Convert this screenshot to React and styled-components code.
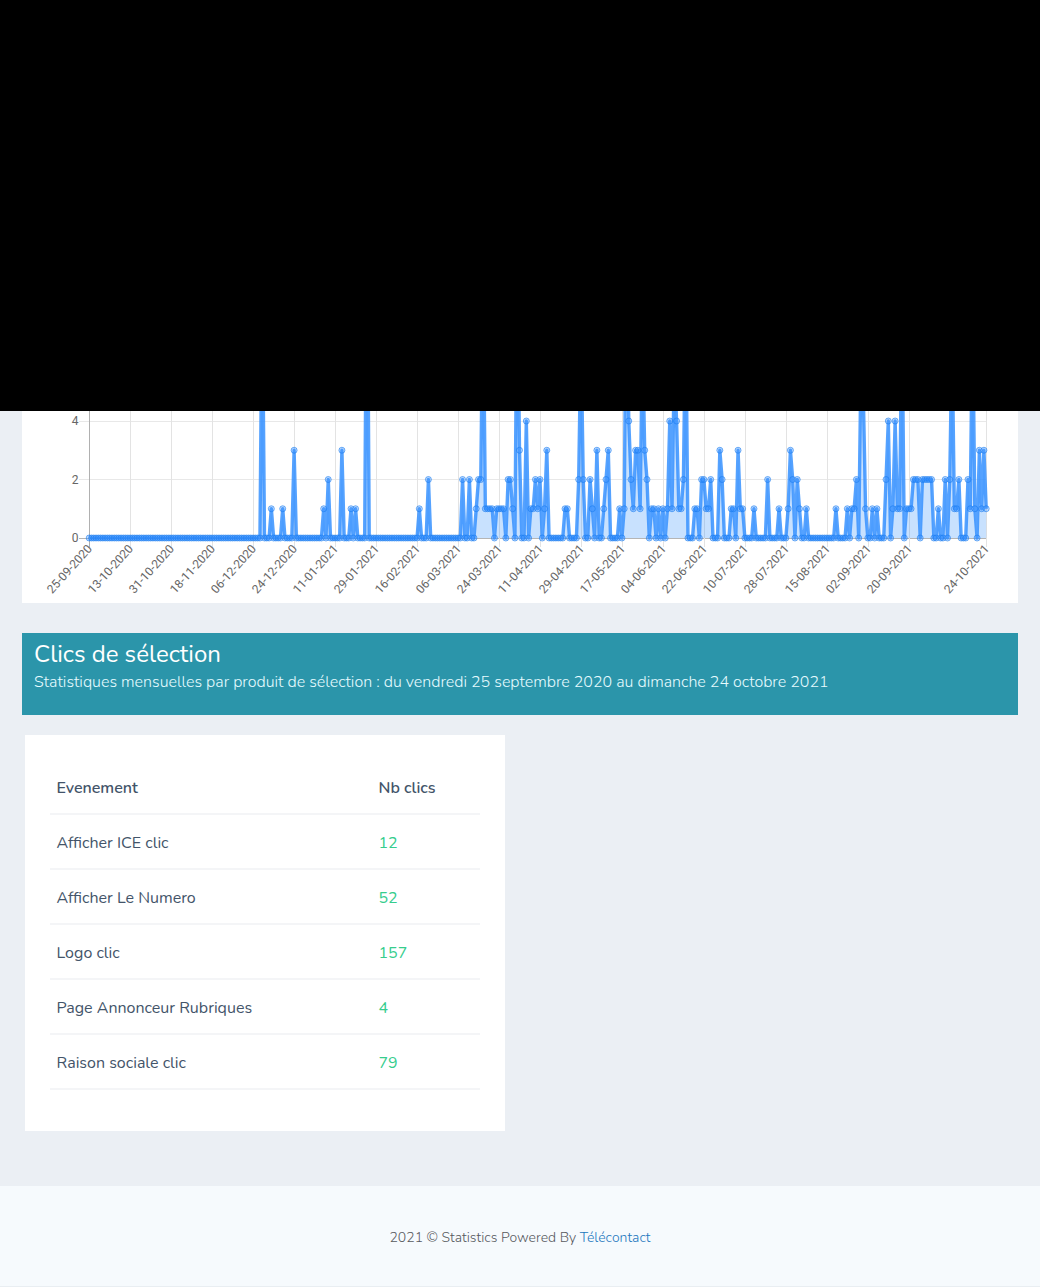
import React from "react";
import styled, { createGlobalStyle } from "styled-components";

const GlobalStyle = createGlobalStyle`
  * { box-sizing: border-box; }
  body {
    margin: 0;
    background: #ebeff4;
    font-family: "Nunito", "Open Sans", "Noto Sans", sans-serif;
    color: #435469;
  }
`;

const Page = styled.div`
  display: flex;
  flex-direction: column;
  min-height: 1287px;
`;
const Cover = styled.div`
  height: 411px;
  background: #000;
`;
const Content = styled.main`
  display: flex;
  flex-direction: column;
  align-items: flex-start;
  padding: 0 22px;
  height: 775px;
`;
const ChartCard = styled.section`
  width: 100%;
  height: 192px;
  background: #fff;
`;
const ChartSvg = styled.svg`
  display: block;
  font-family: Roboto, "Liberation Sans", sans-serif;
  font-size: 12px;
  fill: #666;
`;
const Banner = styled.header`
  width: 100%;
  height: 82px;
  margin-top: 30px;
  padding: 5px 12px 0;
  background: #2b95aa;
  color: #fff;
`;
const Title = styled.h2`
  margin: 0;
  font-size: 24px;
  line-height: 32px;
  font-weight: 400;
`;
const Subtitle = styled.p`
  margin: 0;
  font-size: 16px;
  font-weight: 300;
  line-height: 24px;
  color: #e6fbff;
  white-space: nowrap;
`;
const TableCard = styled.section`
  width: 480px;
  height: 396px;
  margin: 20px 0 0 3px;
  padding: 25px 25px 0;
  background: #fff;
`;
const Table = styled.table`
  width: 100%;
  table-layout: fixed;
  border-collapse: collapse;
  font-size: 16px;
  line-height: 24px;
`;
const cell = `
  padding: 2px 6px 0 6.5px;
  text-align: left;
  border-bottom: 2px solid #f4f5f7;
`;
const Th = styled.th`
  ${cell}
  height: 54px;
  padding-top: 3px;
  width: ${(p) => p.$w}px;
  font-weight: 600;
`;
const Td = styled.td`
  ${cell}
  height: 55px;
  color: ${(p) => (p.$count ? "#36cd8d" : "#435469")};
`;
const Footer = styled.footer`
  display: flex;
  align-items: center;
  justify-content: center;
  height: 101px;
  padding-top: 3px;
  background: #f6fafd;
  border-bottom: 1px solid #e9eef2;
  font-size: 14px;
  font-weight: 300;
  color: #56595d;
`;
const Credit = styled.span`
  white-space: nowrap;
`;
const Link = styled.a`
  color: #2277bd;
  text-decoration: none;
`;

const DAYS = 395;
const LEFT = 67.2;
const STEP = 897 / 394;
const ZERO = 127;
const UNIT = 29.25;

const peaks = {
  76: 9, 80: 1, 85: 1, 90: 3, 103: 1, 105: 2, 111: 3, 115: 1, 117: 1, 122: 12, 145: 1, 149: 2,
};
const runs = [
  [164, [2, 0, 0, 2, 0, 0, 1, 2, 2, 9, 1, 1, 1, 1, 0, 1, 1, 1, 1, 0, 2, 2, 1, 0, 10, 3, 0, 0, 4, 0, 1, 1, 2, 1, 2, 0, 1, 3]],
  [209, [1, 1, 0, 0, 0, 0, 2, 7, 2, 0, 0, 2, 1, 0, 3, 0, 0, 1, 2, 3, 0, 0, 0, 0, 1, 0, 1, 10, 4, 2, 1, 3, 3, 1, 7, 3, 2, 0, 1, 1, 0, 1, 0, 1, 0, 1, 4, 1, 6, 4, 1, 1, 2, 8, 0, 0, 0, 1, 1, 0, 2, 2, 1, 1, 2, 0, 0, 0, 3, 2, 0, 0, 0, 1, 1, 0, 3, 1, 1]],
  [292, [1]], [298, [2]], [303, [1]],
  [307, [1, 3, 2, 0, 2, 1, 0, 0, 1]],
  [328, [1]],
  [333, [1, 0, 1, 1, 2, 0, 6, 5, 1, 0, 0, 1, 0, 1, 0, 0, 0, 2, 4, 0, 1, 4, 1, 1, 8, 0, 1, 1, 1, 2, 2, 2, 0, 2, 2, 2, 2, 2, 0, 0, 1, 0, 0, 2, 0, 2, 7, 1, 1, 2, 0, 0, 0, 2, 1, 8, 1, 0, 3, 1, 3, 1]],
];
const values = Array(DAYS).fill(0);
Object.entries(peaks).forEach(([day, v]) => { values[day] = v; });
runs.forEach(([start, list]) => list.forEach((v, i) => { values[start + i] = v; }));

const ticks = [
  "25-09-2020", "13-10-2020", "31-10-2020", "18-11-2020", "06-12-2020", "24-12-2020", "11-01-2021",
  "29-01-2021", "16-02-2021", "06-03-2021", "24-03-2021", "11-04-2021", "29-04-2021", "17-05-2021",
  "04-06-2021", "22-06-2021", "10-07-2021", "28-07-2021", "15-08-2021", "02-09-2021", "20-09-2021",
].map((label, i) => ({ label, day: i * 18 }));
ticks.push({ label: "24-10-2021", day: 394 });

const px = (day) => LEFT + day * STEP;
const py = (v) => ZERO - v * UNIT;
const line = values.map((v, i) => `${px(i).toFixed(2)},${py(v).toFixed(2)}`).join(" ");

function Chart() {
  return (
    <ChartSvg width="996" height="192" viewBox="0 0 996 192">
      {[0, 2, 4].map((v) => (
        <g key={v}>
          <line x1="57" x2={px(394)} y1={Math.floor(py(v)) + 0.5} y2={Math.floor(py(v)) + 0.5} stroke={v ? "#e8e8e8" : "#b5b5b5"} />
          <text x="56.5" y={py(v) + 4} textAnchor="end">{v}</text>
        </g>
      ))}
      {ticks.map(({ label, day }) => {
        const x = Math.floor(px(day) + 0.3) + 0.5;
        return (
          <g key={label}>
            <line x1={x} x2={x} y1="0" y2="136" stroke={day ? "#e3e3e3" : "#b0b0b0"} />
            <text transform={`translate(${x + 0.3} 135.6) rotate(-48)`} textAnchor="end" y="4">{label}</text>
          </g>
        );
      })}
      <polygon points={`${px(0)},${ZERO} ${line} ${px(394)},${ZERO}`} fill="#2389fa" fillOpacity="0.25" />
      <polyline points={line} fill="none" stroke="#3490ff" strokeOpacity="0.84" strokeWidth="3.4" strokeLinejoin="round" />
      {values.map((v, i) => (
        <circle key={i} cx={px(i)} cy={py(v)} r="3" fill="#3490ff" fillOpacity="0.3" stroke="#1b7df0" strokeOpacity="0.6" />
      ))}
    </ChartSvg>
  );
}

const rows = [
  ["Afficher ICE clic", 12],
  ["Afficher Le Numero", 52],
  ["Logo clic", 157],
  ["Page Annonceur Rubriques", 4],
  ["Raison sociale clic", 79],
];

export default function App() {
  return (
    <Page>
      <GlobalStyle />
      <Cover />
      <Content>
        <ChartCard><Chart /></ChartCard>
        <Banner>
          <Title>Clics de sélection</Title>
          <Subtitle>
            Statistiques mensuelles par produit de sélection : du vendredi 25 septembre 2020 au dimanche 24 octobre 2021
          </Subtitle>
        </Banner>
        <TableCard>
          <Table>
            <thead>
              <tr><Th $w={322}>Evenement</Th><Th $w={108}>Nb clics</Th></tr>
            </thead>
            <tbody>
              {rows.map(([name, count]) => (
                <tr key={name}><Td>{name}</Td><Td $count>{count}</Td></tr>
              ))}
            </tbody>
          </Table>
        </TableCard>
      </Content>
      <Footer>
        <Credit>2021 © Statistics Powered By <Link>Télécontact</Link></Credit>
      </Footer>
    </Page>
  );
}
